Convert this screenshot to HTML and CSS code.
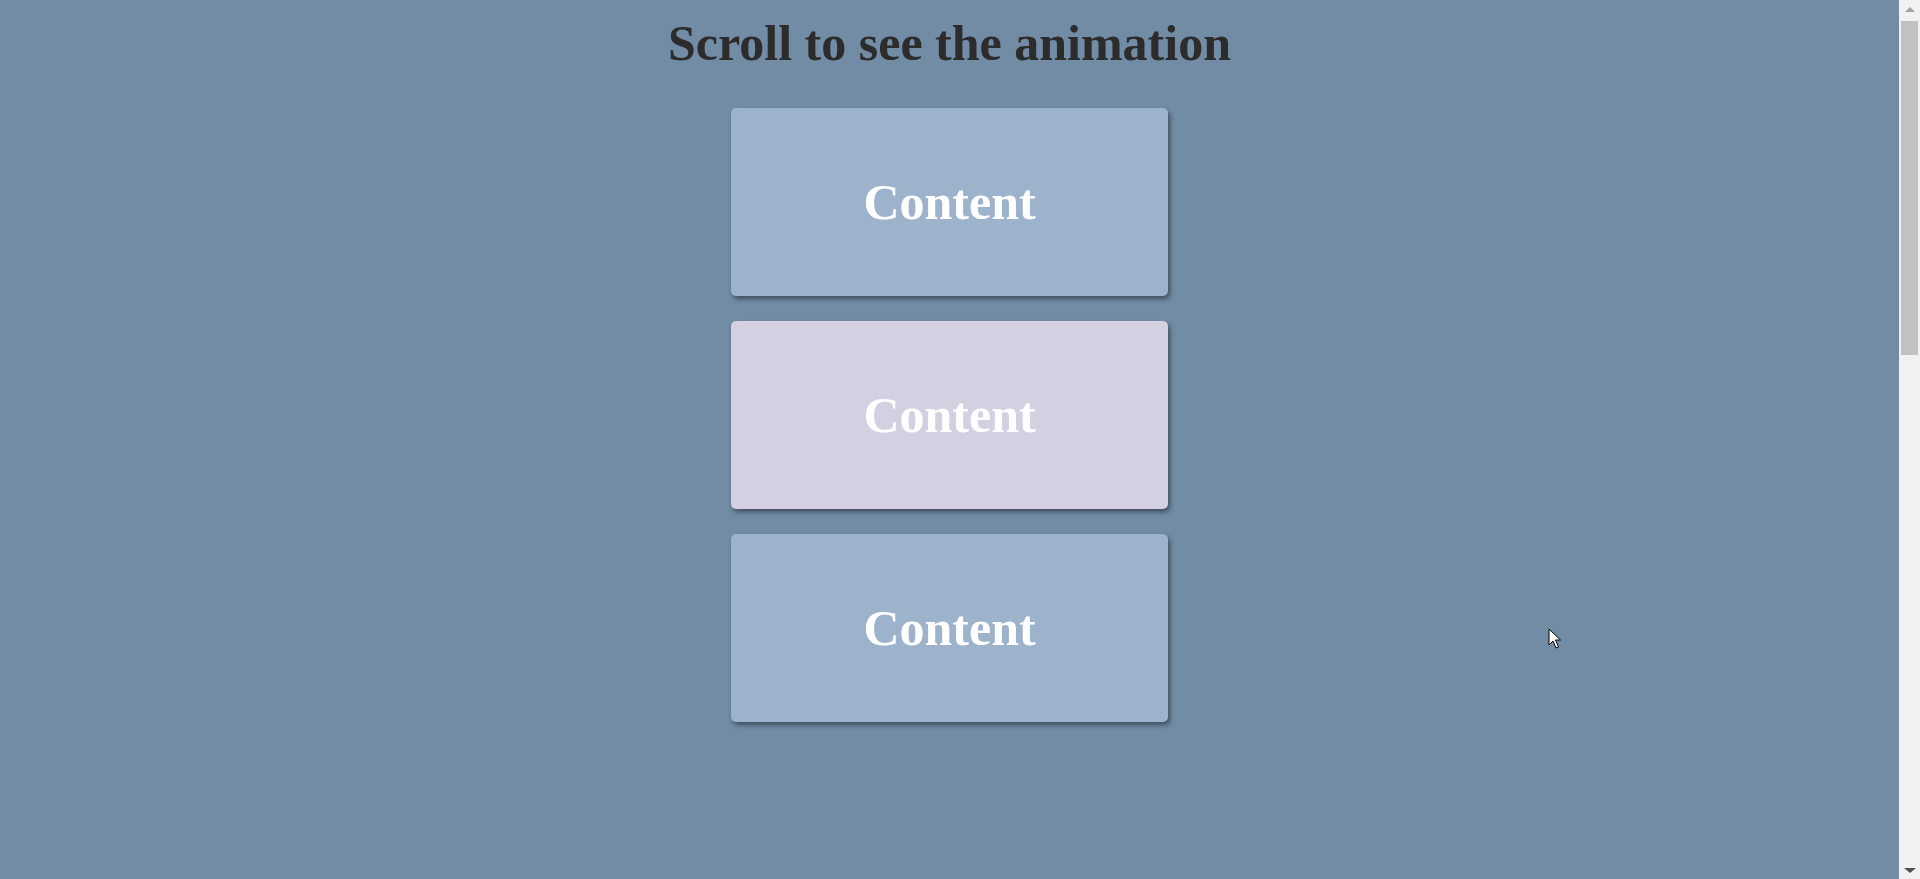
FILE: index.html
```html
<!DOCTYPE html>
<html lang="en">
<head>
<meta charset="utf-8">
<title>Scroll Animation</title>
<link rel="stylesheet" href="styles.css">
</head>
<body>
<main class="page">
  <h1 class="title">Scroll to see the animation</h1>
  <div class="box"><h2 class="box-text">Content</h2></div>
  <div class="box alt"><h2 class="box-text">Content</h2></div>
  <div class="box"><h2 class="box-text">Content</h2></div>
</main>
<aside class="scrollbar">
  <div class="sb-btn"><span class="arrow-up"></span></div>
  <div class="sb-track"><div class="sb-thumb"></div></div>
  <div class="sb-btn"><span class="arrow-down"></span></div>
</aside>
<svg class="cursor" width="14" height="22" viewBox="0 0 14 22">
  <path d="M1 1 L1 17 L5 13 L8 20 L10.5 19 L7.5 12 L12.5 12 Z" fill="#ffffff" stroke="#000000" stroke-width="1" stroke-linejoin="miter"/>
</svg>
</body>
</html>
```
FILE: styles.css
```css
html, body {
  margin: 0;
  padding: 0;
  height: 100%;
}
body {
  background-color: #728ca6;
  font-family: "Liberation Serif", "Times New Roman", serif;
  display: flex;
  flex-direction: row;
  overflow: hidden;
  position: relative;
}
.page {
  flex: 1;
  display: flex;
  flex-direction: column;
  align-items: center;
}
.title {
  margin: 14px 0 36px;
  font-size: 50px;
  font-weight: bold;
  color: #2c2c2c;
  line-height: 58px;
}
.box {
  width: 437px;
  height: 188px;
  margin-bottom: 25px;
  background-color: #9db3cc;
  border-radius: 5px;
  box-shadow: 2px 3px 5px rgba(0, 0, 0, 0.45);
  display: flex;
  align-items: center;
  justify-content: center;
  flex-shrink: 0;
}
.box.alt {
  background-color: #d5d0e1;
}
.box-text {
  margin: 0;
  color: #ffffff;
  font-size: 50px;
  font-weight: bold;
}
.scrollbar {
  width: 21px;
  height: 100%;
  background-color: #f1f1f1;
  display: flex;
  flex-direction: column;
}
.sb-btn {
  height: 19px;
  display: flex;
  align-items: center;
  justify-content: center;
}
.arrow-up {
  width: 0;
  height: 0;
  border-left: 5px solid transparent;
  border-right: 5px solid transparent;
  border-bottom: 5px solid #a3a3a3;
  margin-left: 1px;
}
.arrow-down {
  width: 0;
  height: 0;
  border-left: 6px solid transparent;
  border-right: 6px solid transparent;
  border-top: 5px solid #505050;
  margin-left: 1px;
  margin-top: 2px;
}
.sb-track {
  flex: 1;
  padding: 2px 0 0 2px;
}
.sb-thumb {
  width: 17px;
  height: 334px;
  background-color: #c1c1c1;
}
.cursor {
  position: absolute;
  left: 1548px;
  top: 628px;
}
```
